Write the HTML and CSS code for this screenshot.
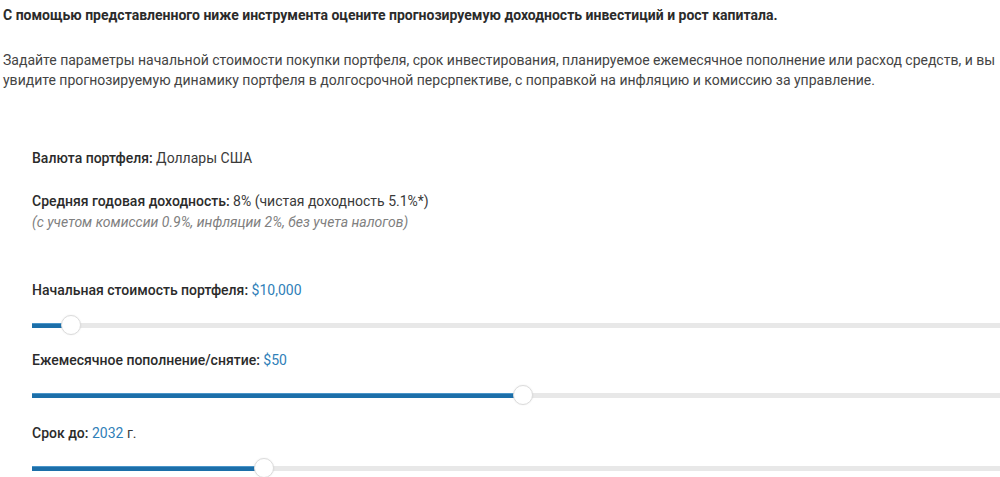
FILE: index.html
```html
<!DOCTYPE html>
<html lang="ru">
<head>
<meta charset="utf-8">
<title>Калькулятор доходности</title>
<link rel="stylesheet" href="styles.css">
</head>
<body>
<div class="page">
  <p class="lead">С помощью представленного ниже инструмента оцените прогнозируемую доходность инвестиций и рост капитала.</p>
  <p class="intro">Задайте параметры начальной стоимости покупки портфеля, срок инвестирования, планируемое ежемесячное пополнение или расход средств, и вы увидите прогнозируемую динамику портфеля в долгосрочной персрпективе, с поправкой на инфляцию и комиссию за управление.</p>

  <div class="panel">
    <div class="info">
      <div class="row"><span class="lbl">Валюта портфеля:</span> Доллары США</div>
      <div class="row gap"><span class="lbl">Средняя годовая доходность:</span> 8% (чистая доходность 5.1%*)</div>
      <div class="row note">(с учетом комиссии 0.9%, инфляции 2%, без учета налогов)</div>
    </div>
  </div>

  <div class="sliders">
    <div class="field">
      <div class="row"><span class="lbl">Начальная стоимость портфеля:</span> <span class="val">$10,000</span></div>
      <div class="slider"><div class="track"><div class="fill" style="width:38px"></div><div class="thumb" style="left:38px"></div></div></div>
    </div>
    <div class="field">
      <div class="row"><span class="lbl">Ежемесячное пополнение/снятие:</span> <span class="val">$50</span></div>
      <div class="slider"><div class="track"><div class="fill" style="width:490px"></div><div class="thumb" style="left:490px"></div></div></div>
    </div>
    <div class="field f3">
      <div class="row"><span class="lbl">Срок до:</span> <span class="val">2032</span> г.</div>
      <div class="slider"><div class="track"><div class="fill" style="width:231px"></div><div class="thumb" style="left:231px"></div></div></div>
    </div>
  </div>
</div>
</body>
</html>
```
FILE: styles.css
```css
html, body {
  margin: 0;
  padding: 0;
  background: #ffffff;
}
body {
  font-family: Roboto, "Liberation Sans", Arial, sans-serif;
  font-size: 14px;
  line-height: 20px;
  color: #3a3a3a;
  overflow: hidden;
}
.page {
  padding: 5px 0 0 3px;
}
p {
  margin: 0;
}
.lead {
  font-weight: 700;
  color: #2b2b2b;
}
.intro {
  margin-top: 25px;
  color: #444;
}
.panel {
  margin-top: 58px;
  padding-left: 29px;
}
.info .row.gap {
  margin-top: 23px;
}
.lbl {
  font-weight: 500;
  color: #2b2b2b;
}
.note {
  font-style: italic;
  color: #808080;
  margin-top: 1px;
}
.sliders {
  margin-top: 48px;
  padding-left: 29px;
}
.val {
  color: #2f80b8;
}
.slider {
  height: 50px;
  display: flex;
  align-items: center;
}
.f3 .row {
  margin-top: 3px;
}
.track {
  position: relative;
  width: 100%;
  height: 5px;
  background: #e8e8e8;
}
.fill {
  height: 5px;
  background: #1c6fa9;
  border-top: 1px solid #4a95c9;
  box-sizing: border-box;
}
.thumb {
  position: absolute;
  top: 50%;
  width: 18px;
  height: 18px;
  margin: -10px 0 0 -9px;
  border-radius: 50%;
  background: #ffffff;
  border: 1px solid #dcdcdc;
  box-shadow: 0 0 2px rgba(0,0,0,0.08);
}
```
